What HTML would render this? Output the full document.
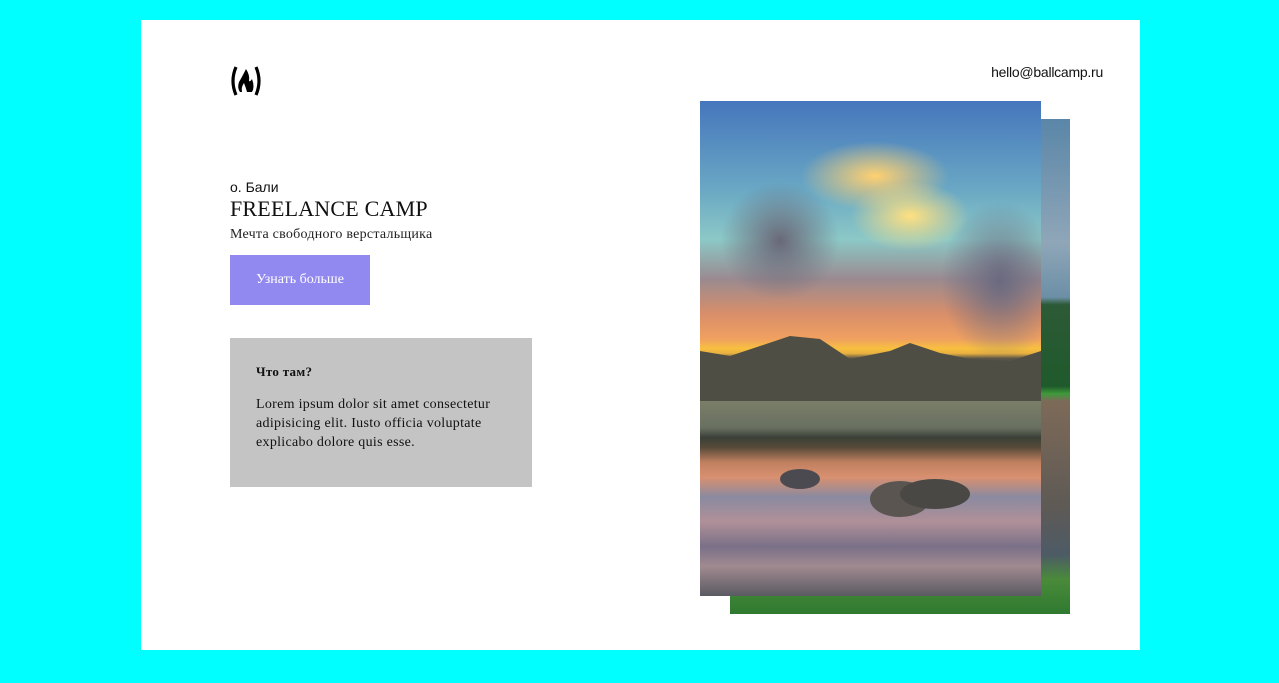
<!DOCTYPE html>
<html><head><meta charset="utf-8"><style>
html,body{margin:0;padding:0}
body{width:1279px;height:683px;background:#00ffff;position:relative;overflow:hidden;font-family:"Liberation Serif",serif}
.page{position:absolute;left:141px;top:20px;width:999px;height:630px;background:#fff}
.abs{position:absolute}
</style></head><body>
<div class="page"></div>
<svg class="abs" style="left:229px;top:64px" width="34" height="34" viewBox="0 0 34 34">
<path d="M7 3 Q1 17 7 31" fill="none" stroke="#000" stroke-width="3.2"/>
<path d="M27 3 Q33 17 27 31" fill="none" stroke="#000" stroke-width="3.2"/>
<path d="M17 5 Q13 13 10 18 Q8 24 11 28 L13 28 Q12 23 15 19 Q17 24 18 28 L23 28 Q26 23 23 15 Q21 18 20 17 Q21 11 17 5Z" fill="#000"/>
</svg>
<div class="abs" style="right:176px;top:64px;font:14px 'Liberation Sans',sans-serif;color:#111;letter-spacing:-0.25px">hello@ballcamp.ru</div>
<div class="abs" style="left:230px;top:179px;font:14px 'Liberation Sans',sans-serif;color:#111">о. Бали</div>
<div class="abs" style="left:230px;top:196px;font:22px 'Liberation Serif',serif;color:#111;letter-spacing:0.2px">FREELANCE CAMP</div>
<div class="abs" style="left:230px;top:227px;font:14px 'Liberation Serif',serif;color:#222;letter-spacing:0.25px">Мечта свободного верстальщика</div>
<div class="abs" style="left:230px;top:255px;width:140px;height:50px;background:#9289f0;color:#fff;font:14px 'Liberation Serif',serif;line-height:50px;text-align:center">Узнать больше</div>
<div class="abs" style="left:230px;top:338px;width:302px;height:149px;background:#c4c4c4"></div>
<div class="abs" style="left:256px;top:364px;font:bold 13px 'Liberation Serif',serif;color:#111;letter-spacing:0.3px">Что там?</div>
<div class="abs" style="left:256px;top:395px;width:260px;font:14px/19px 'Liberation Serif',serif;color:#111;letter-spacing:0.3px">Lorem ipsum dolor sit amet consectetur adipisicing elit. Iusto officia voluptate explicabo dolore quis esse.</div>
<div class="abs" style="left:730px;top:119px;width:340px;height:495px;background:linear-gradient(180deg,#5a86a8 0%,#8fa6b8 25%,#6c8fa6 36%,#2d5a36 37.5%,#1f5a2c 54%,#3d9a3a 55.5%,#7d6a58 57%,#5f5a55 78%,#4d5b66 88%,#4a8a3a 93%,#2f7a30 100%)"></div>
<div class="abs" style="left:700px;top:101px;width:341px;height:495px;overflow:hidden;background:linear-gradient(180deg,#4576bc 0%,#6aa8c4 18%,#8cc8c6 28%,#9a8a90 36%,#d88e6a 43%,#f0a060 48%,#f8c040 50%,#e8b040 51%,#5a5448 52%,#4a4a40 56%,#40503a 58%,#7a8068 60%,#6a7060 66%,#3a4038 68%,#584a3a 70%,#c08060 73%,#d89070 76%,#8a8aa0 80%,#b09098 85%,#7a7088 90%,#a08a90 94%,#5a5a62 100%)">
<div class="abs" style="left:100px;top:40px;width:150px;height:70px;border-radius:50%;background:radial-gradient(#ffd070,rgba(255,200,120,0) 70%)"></div>
<div class="abs" style="left:150px;top:80px;width:120px;height:70px;border-radius:50%;background:radial-gradient(#ffe080,rgba(255,220,120,0) 70%)"></div>
<div class="abs" style="left:20px;top:80px;width:120px;height:120px;border-radius:50%;background:radial-gradient(#6a6878,rgba(100,100,120,0) 70%)"></div>
<div class="abs" style="left:240px;top:100px;width:120px;height:160px;border-radius:50%;background:radial-gradient(#6a6a80,rgba(100,100,120,0) 70%)"></div>
<svg class="abs" style="left:0;top:230px" width="341" height="70"><path d="M0 20 L30 25 L60 15 L90 5 L120 8 L150 28 L190 20 L210 12 L240 22 L270 28 L310 30 L341 20 L341 70 L0 70Z" fill="#4e4e44"/></svg>
<div class="abs" style="left:170px;top:380px;width:60px;height:36px;border-radius:50%;background:#5a5550"></div>
<div class="abs" style="left:200px;top:378px;width:70px;height:30px;border-radius:50%;background:#4a4844"></div>
<div class="abs" style="left:80px;top:368px;width:40px;height:20px;border-radius:50%;background:#4a4a50"></div>
</div>
</body></html>
